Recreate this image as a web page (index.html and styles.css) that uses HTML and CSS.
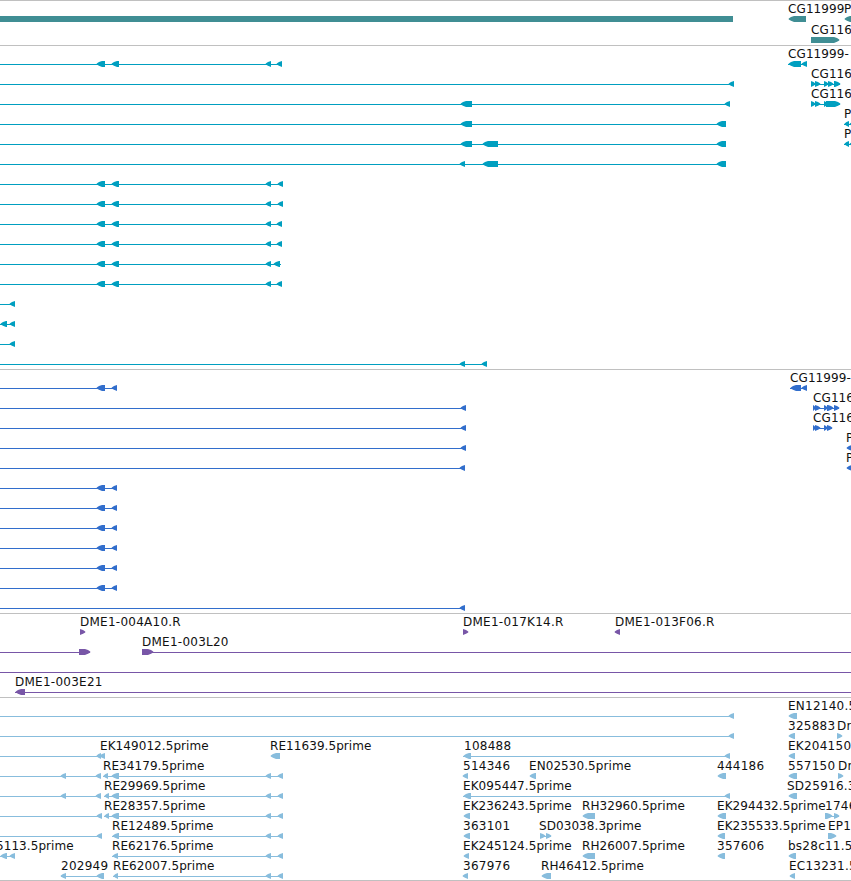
FILE: index.html
```html
<!DOCTYPE html>
<html lang="en">
<head>
<meta charset="UTF-8">
<meta name="viewport" content="width=device-width, initial-scale=1.0">
<title>Genome browser</title>
<link rel="stylesheet" href="styles.css">
</head>
<body>
    <div class="browser">
        <div class="track gene" id="gene"></div>
        <div class="track transcript" id="transcript"></div>
        <div class="track cds" id="cds"></div>
        <div class="track bac" id="bac"></div>
        <div class="track est" id="est"></div>
    </div>
    <script src="tracks.js"></script>
</body>
</html>
```

FILE: styles.css
```css
body {
    margin: 0;
    padding: 0;
    background-color: #ffffff;
    overflow: hidden;
}
.browser {
    width: 851px;
    height: 880px;
    overflow: hidden;
    border-bottom: 1px solid #c0c0c0;
}
.track {
    border-top: 1px solid #c0c0c0;
    padding: 2px 0 1px;
}
.gene, .est {
    padding-bottom: 0;
}
.row {
    display: block;
    width: 851px;
    height: 20px;
    overflow: visible;
}
.gene .row {
    height: 21px;
}
.gene {
    fill: #408e94;
}
.transcript {
    fill: #009fc0;
}
.cds {
    fill: #326ecc;
}
.bac {
    fill: #7856a7;
}
.est {
    fill: #88bddd;
}
.line, .bar {
    shape-rendering: crispEdges;
}
.label {
    fill: #111111;
    font-family: "DejaVu Sans", sans-serif;
    font-size: 12px;
    letter-spacing: 0.25px;
}
.label.gene-name {
    letter-spacing: 0.1px;
}
.label.prime {
    letter-spacing: 0.07px;
}
```

FILE: tracks.js
```js
// one string per row, features separated by spaces:
//   -a:b line, <a:b left arrow, >a:b right arrow, =a:b bar, text@x label
var tracks = {
    gene: [
        '=0:733 CG11999@788 <788:806 P@844 <844:856',
        'CG116@811 >811:840'
    ],
    transcript: [
        '-0:282 <96:105 <111:119 <265:271 <276:282 CG11999-@788 -788:807 <788:801 <801:807',
        '-0:734 <728:734 CG116@811 -811:840 >811:816 >815:821 >824:829 >828:834 >834:841',
        '-0:730 <460:472 <724:730 CG116@811 -811:840 >811:816 >815:821 >824:828 >826:841',
        '-0:726 <460:472 <716:726 P@844 -844:851 <844:849 <849:855',
        '-0:726 <460:472 <482:498 <716:726 P@844 -844:851 <844:849 <849:855',
        '-0:726 <459:465 <482:498 <716:726',
        '-0:283 <96:105 <111:119 <265:271 <277:283',
        '-0:283 <96:105 <111:119 <265:271 <277:283',
        '-0:282 <96:105 <111:119 <265:271 <276:282',
        '-0:282 <96:105 <111:119 <265:271 <276:282',
        '-0:281 <96:105 <111:119 <265:271 <273:280',
        '-0:282 <96:105 <111:119 <265:271 <276:282',
        '-0:15 <9:15',
        '-0:15 <0:7 <9:15',
        '-0:15 <9:15',
        '-0:487 <459:465 <481:487'
    ],
    cds: [
        '-0:117 <96:105 <111:117 CG11999-@790 -790:807 <790:801 <801:807',
        '-0:466 <460:466 CG116@813 -813:839 >813:816 >815:821 >824:828 >827:834 >834:840',
        '-0:466 <460:466 CG116@813 -813:832 >813:816 >815:821 >824:828 >827:833',
        '-0:466 <460:466 P@846 <846:858',
        '-0:465 <459:465 P@846 <846:858',
        '-0:117 <96:105 <111:117',
        '-0:117 <96:105 <111:117',
        '-0:117 <96:105 <111:117',
        '-0:117 <96:105 <111:117',
        '-0:117 <96:105 <111:117',
        '-0:117 <96:105 <111:117',
        '-0:465 <459:465'
    ],
    bac: [
        'DME1-004A10.R@80 >80:86 DME1-017K14.R@463 >463:469 DME1-013F06.R@615 <614:620',
        '-0:90 >79:91 DME1-003L20@142 -142:851 >142:154',
        '-0:851',
        'DME1-003E21@15 -15:851 <15:25'
    ],
    est: [
        '-0:734 <728:734 EN12140.5@788 <788:797',
        '-0:734 <728:734 325883@788 <788:795 Dr@837 >837:843',
        'EK149012.5prime@100 -0:105 <96:101 <99:105 RE11639.5prime@270 <270:280 108488@464 -463:730 <463:471 <724:730 EK204150@788 <788:795',
        'RE34179.5prime@103 -0:101 <60:66 <95:101 -103:283 <103:108 <111:119 <265:271 <277:283 514346@463 <462:468 EN02530.5prime@529 <529:536 444186@717 <717:726 557150@788 <788:797 Dr@838 >838:844',
        'RE29969.5prime@104 -0:101 <60:66 <95:101 -104:283 <104:109 <111:119 <265:271 <277:283 EK095447.5prime@463 -463:730 <463:471 <724:730 SD25916.3@787 <788:797',
        'RE28357.5prime@104 -0:102 <96:102 -104:283 <104:109 <111:119 <265:271 <277:283 EK236243.5prime@463 <463:470 RH32960.5prime@582 <582:595 EK294432.5prime@717 <717:726 1746@825 -825:839 >825:833 >834:840',
        'RE12489.5prime@112 -0:102 <96:102 -112:283 <112:119 <265:271 <277:283 363101@463 <463:470 SD03038.3prime@539 -540:551 >540:546 >546:552 EK235533.5prime@717 <717:725 EP1@828 >828:837',
        '5113.5prime@-4 -0:15 <0:7 <9:15 RE62176.5prime@112 -112:283 <112:118 <265:271 <277:283 EK245124.5prime@463 <463:469 RH26007.5prime@582 <582:595 357606@717 <717:725 bs28c11.5@788 <788:796',
        '202949@61 -61:104 <60:66 <96:104 RE62007.5prime@113 -113:283 <113:118 <265:271 <277:283 367976@463 <462:468 RH46412.5prime@541 <541:551 EC13231.5@789 <789:795'
    ]
};

function drawLabel(text, x) {
    var kind = '';
    if (text.indexOf('prime') > 0) {
        kind = ' prime';
    } else if (text.indexOf('CG') === 0) {
        kind = ' gene-name';
    }
    return '<text class="label' + kind + '" x="' + x + '" y="10">' + text + '</text>';
}

// tip at x, head widening towards base, then a block up to end
function drawArrow(x, base, end) {
    var tip = x + (base - x) * 0.12;
    var mid = x + (base - x) * 0.5;
    var points = [[tip, 15.4], [mid, 14.1], [base, 13], [end, 13], [end, 19], [base, 19], [mid, 17.7], [tip, 16.4]];
    return '<polygon points="' + points.join(' ') + '"/>';
}

function drawFeature(item) {
    var at = item.indexOf('@');
    if (at > 0) {
        return drawLabel(item.slice(0, at), item.slice(at + 1));
    }
    var ends = item.slice(1).split(':').map(Number);
    var a = ends[0], b = ends[1];
    var head = Math.min(b - a, 6);
    if (item[0] === '-') {
        return '<rect class="line" x="' + a + '" y="16" width="' + (b - a) + '" height="1"/>';
    }
    if (item[0] === '=') {
        return '<rect class="bar" x="' + a + '" y="13" width="' + (b - a) + '" height="6"/>';
    }
    if (item[0] === '<') {
        return drawArrow(a, a + head, b);
    }
    return drawArrow(b, b - head, a);
}

for (var name in tracks) {
    document.getElementById(name).innerHTML = tracks[name].map(function (row) {
        return '<svg class="row">' + row.split(' ').map(drawFeature).join('') + '</svg>';
    }).join('');
}
```
